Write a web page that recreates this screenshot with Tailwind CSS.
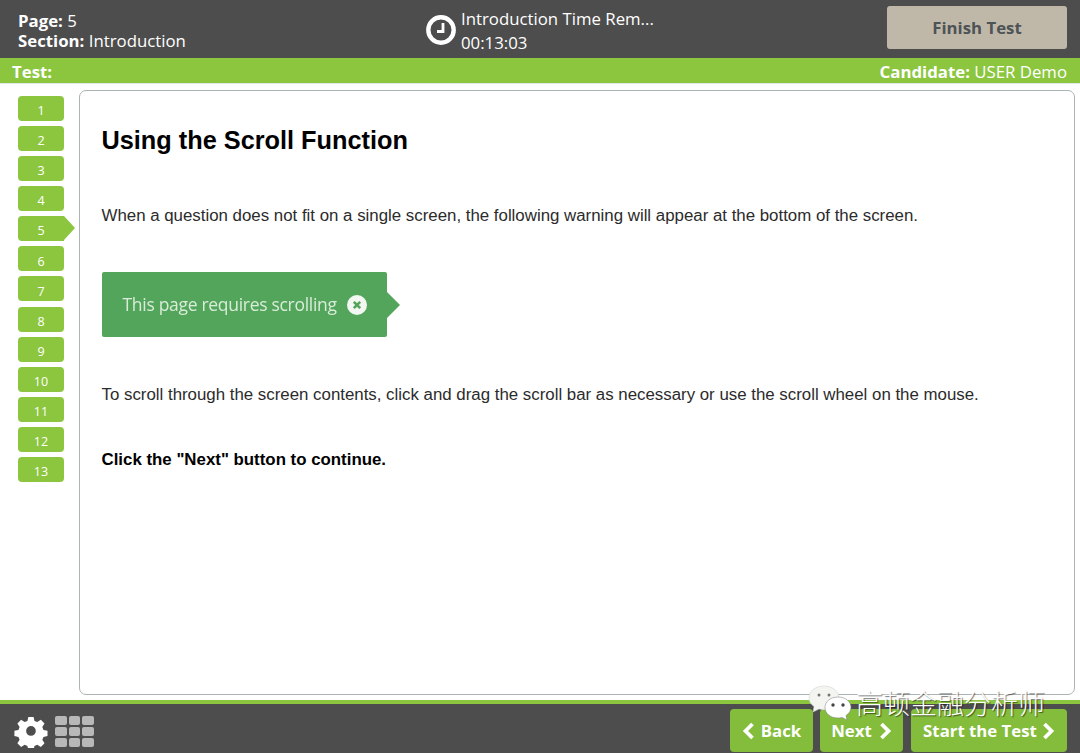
<!DOCTYPE html>
<html lang="en">
<head>
  <meta charset="UTF-8">
  <title>Using the Scroll Function</title>
  <script src="https://cdn.jsdelivr.net/npm/@tailwindcss/browser@4"></script>
</head>
<body class="relative w-[1080px] h-[753px] overflow-hidden bg-white font-['Open_Sans',sans-serif] flex flex-col">

  <!-- Top bar -->
  <header class="h-[58px] bg-[#4d4d4d] text-white flex shrink-0">
    <div class="w-[426px] pl-[18px] pt-[11px] text-[16.8px] leading-[20px]">
      <div><b class="font-bold">Page:</b> 5</div>
      <div><b class="font-bold">Section:</b> Introduction</div>
    </div>
    <div class="flex w-[461px] pt-[7px]">
      <svg class="w-[30px] h-[30px] mt-[8px] shrink-0" viewBox="0 0 30 30" fill="none" stroke="white">
        <circle cx="15" cy="15" r="12.7" stroke-width="4.400"/>
        <path d="M17 8v8.500h-6" stroke-width="2.800"/>
      </svg>
      <div class="pl-[5px] text-[16.8px] leading-[24px]">
        <div>Introduction Time Rem...</div>
        <div>00:13:03</div>
      </div>
    </div>
    <div class="pt-[6px]">
      <button class="w-[180px] h-[43px] rounded-[3px] bg-[#bfb8a8] text-[#4d5356] text-[16.8px] font-bold">Finish Test</button>
    </div>
  </header>

  <!-- Test bar -->
  <div class="h-[25px] bg-[#8cc63f] text-white flex justify-between items-center pl-[12px] pr-[13px] pt-[2px] text-[16.8px] shrink-0">
    <b class="font-bold">Test:</b>
    <span><b class="font-bold">Candidate:</b> USER Demo</span>
  </div>

  <!-- Main -->
  <main class="flex-1 flex min-h-0 border-t border-[#dfe6e6] pr-[4px]">
    <nav class="w-[79px] shrink-0 pl-[18px] pt-[12px] flex flex-col gap-[5.08px] text-white text-[12.5px]">
      <div class="w-[46px] h-[25px] rounded-[4px] bg-[#8cc63f] flex items-center justify-center pt-[6px]">1</div>
      <div class="w-[46px] h-[25px] rounded-[4px] bg-[#8cc63f] flex items-center justify-center pt-[6px]">2</div>
      <div class="w-[46px] h-[25px] rounded-[4px] bg-[#8cc63f] flex items-center justify-center pt-[6px]">3</div>
      <div class="w-[46px] h-[25px] rounded-[4px] bg-[#8cc63f] flex items-center justify-center pt-[6px]">4</div>
      <div class="relative w-[46px] h-[25px] rounded-l-[4px] bg-[#8cc63f] flex items-center justify-center pt-[6px]">5
        <span class="absolute left-[46px] top-0 border-y-[12.5px] border-y-transparent border-l-[11px] border-l-[#8cc63f]"></span>
      </div>
      <div class="w-[46px] h-[25px] rounded-[4px] bg-[#8cc63f] flex items-center justify-center pt-[6px]">6</div>
      <div class="w-[46px] h-[25px] rounded-[4px] bg-[#8cc63f] flex items-center justify-center pt-[6px]">7</div>
      <div class="w-[46px] h-[25px] rounded-[4px] bg-[#8cc63f] flex items-center justify-center pt-[6px]">8</div>
      <div class="w-[46px] h-[25px] rounded-[4px] bg-[#8cc63f] flex items-center justify-center pt-[6px]">9</div>
      <div class="w-[46px] h-[25px] rounded-[4px] bg-[#8cc63f] flex items-center justify-center pt-[6px]">10</div>
      <div class="w-[46px] h-[25px] rounded-[4px] bg-[#8cc63f] flex items-center justify-center pt-[6px]">11</div>
      <div class="w-[46px] h-[25px] rounded-[4px] bg-[#8cc63f] flex items-center justify-center pt-[6px]">12</div>
      <div class="w-[46px] h-[25px] rounded-[4px] bg-[#8cc63f] flex items-center justify-center pt-[6px]">13</div>
    </nav>

    <section class="mt-[6px] mb-[5px] w-[996px] h-[605px] border border-[#aab4b4] rounded-[7px] pl-[21.500px] font-['Liberation_Sans',sans-serif] text-[16.85px] text-[#2b2b2b]">
      <h1 class="mt-[34px] text-[25.3px] leading-[30px] font-bold text-black">Using the Scroll Function</h1>
      <p class="mt-[51px] leading-[20px]">When a question does not fit on a single screen, the following warning will appear at the bottom of the screen.</p>
      <div class="relative mt-[46px] w-[285.5px] h-[65px] rounded-[2px] bg-[#52a55a] flex items-center pl-[21px] font-['Open_Sans',sans-serif] text-[#d9ecd9] text-[17.5px] tracking-[-0.3px] blur-[0.3px]">
        This page requires scrolling
        <svg class="w-[20px] h-[20px] ml-[10px]" viewBox="0 0 20 20">
          <circle cx="10" cy="10" r="10" fill="#f2f7f2"/>
          <path d="M6.800 6.800l6.400 6.400M13.200 6.800l-6.400 6.400" stroke="#52a55a" stroke-width="2.600"/>
        </svg>
        <span class="absolute left-[285.5px] top-[20px] border-y-[13px] border-y-transparent border-l-[13px] border-l-[#52a55a]"></span>
      </div>
      <p class="mt-[48px] leading-[20px]">To scroll through the screen contents, click and drag the scroll bar as necessary or use the scroll wheel on the mouse.</p>
      <p class="mt-[45px] leading-[20px] font-bold text-black">Click the "Next" button to continue.</p>
    </section>
  </main>

  <!-- Footer -->
  <footer class="h-[53px] shrink-0 bg-[#4d4d4d] border-t-[4px] border-[#8cc63f] flex items-start">
    <svg class="ml-[14px] mt-[10px] w-[34px] h-[34px]" viewBox="0 0 34 34" fill="white">
      <path fill-rule="evenodd" d="M14 1h6l1 4.600 3.200 1.300 4-2.500 4.200 4.200-2.500 4 1.300 3.200 4.600 1v6l-4.600 1-1.300 3.200 2.500 4-4.200 4.200-4-2.500-3.200 1.300-1 4.600h-6l-1-4.600-3.200-1.300-4 2.500-4.200-4.200 2.500-4-1.300-3.200-4.600-1v-6l4.600-1 1.300-3.200-2.500-4 4.200-4.200 4 2.500 3.200-1.300zM17 11.500a5.500 5.500 0 1 0 0 11 5.500 5.500 0 0 0 0-11z" transform="translate(2 2) scale(.88)"/>
    </svg>
    <div class="ml-[7px] mt-[12px] grid grid-cols-3 gap-[2px] w-[39px]">
      <span class="h-[9px] rounded-[2px] bg-[#b8b8b8]"></span>
      <span class="h-[9px] rounded-[2px] bg-[#b8b8b8]"></span>
      <span class="h-[9px] rounded-[2px] bg-[#b8b8b8]"></span>
      <span class="h-[9px] rounded-[2px] bg-[#b8b8b8]"></span>
      <span class="h-[9px] rounded-[2px] bg-[#b8b8b8]"></span>
      <span class="h-[9px] rounded-[2px] bg-[#b8b8b8]"></span>
      <span class="h-[9px] rounded-[2px] bg-[#b8b8b8]"></span>
      <span class="h-[9px] rounded-[2px] bg-[#b8b8b8]"></span>
      <span class="h-[9px] rounded-[2px] bg-[#b8b8b8]"></span>
    </div>
    <div class="ml-auto mr-[13px] mt-[5px] flex text-white text-[16.8px] font-bold">
      <button class="w-[83px] h-[43px] mr-[7px] rounded-[4px] bg-[#83bd3b] flex items-center justify-center gap-[6px]">
        <svg class="w-[13px] h-[18px]" viewBox="0 0 13 18" fill="none" stroke="white" stroke-width="3.800"><path d="M10.500 2L3.500 9l7 7"/></svg>
        Back
      </button>
      <button class="w-[83px] h-[43px] mr-[8px] rounded-[4px] bg-[#83bd3b] flex items-center justify-center gap-[7px]">
        Next
        <svg class="w-[13px] h-[18px]" viewBox="0 0 13 18" fill="none" stroke="white" stroke-width="3.800"><path d="M2.500 2l7 7-7 7"/></svg>
      </button>
      <button class="w-[156px] h-[43px] rounded-[4px] bg-[#83bd3b] flex items-center justify-center gap-[5px]">
        Start the Test
        <svg class="w-[13px] h-[18px]" viewBox="0 0 13 18" fill="none" stroke="white" stroke-width="3.800"><path d="M2.500 2l7 7-7 7"/></svg>
      </button>
    </div>
  </footer>

  <!-- Watermark over the page -->
  <div class="absolute left-[807px] top-[684px] flex items-start">
    <svg class="w-[46px] h-[38px]" viewBox="0 0 46 38">
      <path d="M17 2C8 2 2 7.500 2 14c0 3.500 2 6.500 5 8.500L6 28l6-3c2 .5 3 .8 5 .8 9 0 15-5.500 15-11.800S26 2 17 2z" fill="#f4f4f0" stroke="#ccc" stroke-width=".5"/>
      <circle cx="12" cy="11" r="1.500" fill="#777"/><circle cx="22" cy="11" r="1.500" fill="#777"/>
      <path d="M31 13c-8 0-13 5-13 10.500S23 34 31 34c1.500 0 2.500-.2 4-.6l5 2.600-1-4.500c3-2 5-4.700 5-8C44 18 39 13 31 13z" fill="#fff" stroke="#777" stroke-width=".5"/>
      <circle cx="26" cy="21" r="1.700" fill="#444"/><circle cx="36" cy="21" r="1.700" fill="#444"/>
    </svg>
    <span class="ml-[3px] mt-[3px] text-[27px] leading-[32px] text-white font-['Noto_Sans_CJK_SC',sans-serif] font-light [text-shadow:1px_1px_1px_rgba(0,0,0,0.55)]">高顿金融分析师</span>
  </div>
</body>
</html>
